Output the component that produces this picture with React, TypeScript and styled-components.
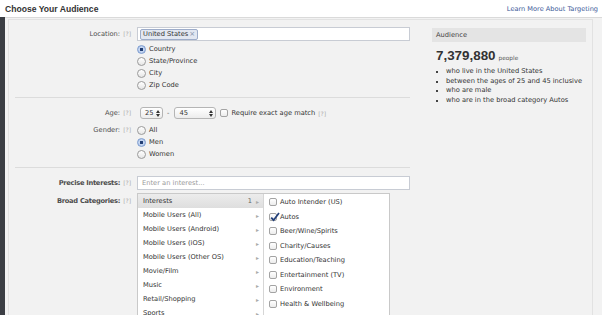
import React from 'react';
import styled, { createGlobalStyle } from 'styled-components';

const GlobalStyle = createGlobalStyle`
  html, body {
    margin: 0;
    padding: 0;
    background: #fff;
  }
  body {
    font-family: "DejaVu Sans", "Liberation Sans", sans-serif;
    font-size: 6.7px;
    color: #333;
  }
`;

const Page = styled.div`
  width: 602px;
  height: 315px;
  overflow: hidden;
  display: flex;
  flex-direction: column;
`;

const Header = styled.div`
  height: 17px;
  flex: none;
  box-sizing: border-box;
  padding: 0 4px 0 5px;
  display: flex;
  align-items: center;
  justify-content: space-between;
`;

const Title = styled.h1`
  margin: 0;
  font-family: "Liberation Sans", Arial, sans-serif;
  font-size: 8.6px;
  font-weight: bold;
  color: #333;
`;

const HeaderLink = styled.a`
  color: #3b5998;
  text-decoration: none;
  font-size: 6.6px;
`;

const Body = styled.div`
  flex: 1;
  display: flex;
  min-height: 0;
`;

const Strip = styled.div`
  width: 5px;
  flex: none;
  background: #3b3e44;
`;

const Main = styled.div`
  flex: 1;
  background: #f2f2f2;
  border-top: 1px solid #dadada;
  padding: 1px 9px 0 3px;
  display: flex;
`;

const Inner = styled.div`
  flex: 1;
  border: 1px solid #e2e2e2;
  border-bottom: none;
  padding-right: 5px;
  display: grid;
  grid-template-columns: 401px 154px;
  column-gap: 22px;
  align-items: start;
`;

const FormCol = styled.div`
  display: flex;
  flex-direction: column;
`;

const FieldRow = styled.div<{ $mt: number }>`
  display: grid;
  grid-template-columns: 122px 1fr;
  column-gap: 6px;
  margin-top: ${p => p.$mt}px;
  align-items: start;
`;

const Label = styled.div<{ $lh: number; $bold?: boolean }>`
  text-align: right;
  line-height: ${p => p.$lh}px;
  white-space: nowrap;
  color: #4e4e4e;
  font-weight: ${p => (p.$bold ? 'bold' : 'normal')};
  letter-spacing: ${p => (p.$bold ? '-0.28px' : 'normal')};
`;

const Help = styled.span`
  margin-left: 3px;
  color: #aaa;
  font-weight: normal;
  letter-spacing: 0;
  font-size: 6px;
`;

const Controls = styled.div`
  display: flex;
  flex-direction: column;
`;

const TextBox = styled.div`
  height: 14px;
  box-sizing: border-box;
  width: 273px;
  background: #fff;
  border: 1px solid #c8ccd4;
  display: flex;
  align-items: center;
  padding: 0 2px;
`;

const Placeholder = styled.span`
  color: #9a9a9a;
  padding-left: 2px;
`;

const Token = styled.span`
  height: 9px;
  line-height: 9px;
  padding: 0 2px;
  border: 1px solid #9dacc9;
  border-radius: 2px;
  background: #e2e7f1;
  color: #333;
  display: inline-flex;
  align-items: center;
  gap: 1px;
`;

const TokenX = styled.span`
  color: #8592aa;
  font-size: 7px;
`;

const Options = styled.div<{ $mt?: number }>`
  display: flex;
  flex-direction: column;
  margin-top: ${p => p.$mt ?? 0}px;
`;

const Option = styled.div`
  height: 12px;
  display: flex;
  align-items: center;
  gap: 3px;
  color: #333;
`;

const Radio = styled.span<{ $on?: boolean }>`
  width: 9px;
  height: 9px;
  box-sizing: border-box;
  border-radius: 50%;
  border: 1px solid ${p => (p.$on ? '#7d9ccf' : '#9a9a9a')};
  background: ${p =>
    p.$on
      ? 'radial-gradient(circle, #203d73 0 1.4px, #c7d7f1 1.9px, #a9c1e8 100%)'
      : 'linear-gradient(#ffffff, #e6e6e6)'};
  flex: none;
`;

const Box = styled.span<{ $ml?: number }>`
  width: 8px;
  height: 8px;
  box-sizing: border-box;
  margin-left: ${p => p.$ml ?? 0}px;
  border: 1px solid #a3a3a3;
  border-radius: 2px;
  background: linear-gradient(#ffffff, #ececec);
  flex: none;
  position: relative;
`;

const Tick = styled.svg`
  position: absolute;
  left: 0;
  top: -2px;
  overflow: visible;
`;

const Divider = styled.div<{ $mt: number }>`
  height: 1px;
  background: #dcdcdc;
  margin: ${p => p.$mt}px 0 0 6px;
`;

const AgeLine = styled.div`
  height: 12px;
  display: flex;
  align-items: center;
  padding-left: 3px;
`;

const Select = styled.div<{ $w: number }>`
  width: ${p => p.$w}px;
  height: 12px;
  box-sizing: border-box;
  border: 1px solid #b5b5b5;
  border-radius: 3px;
  background: linear-gradient(#ffffff, #ececec);
  display: flex;
  align-items: center;
  justify-content: space-between;
  padding: 0 2px 0 4px;
`;

const Dash = styled.span`
  margin: 0 5px 0 4px;
  color: #555;
`;

const CheckLabel = styled.span`
  margin-left: 3px;
  color: #333;
`;

const Picker = styled.div`
  width: 253px;
  height: 130px;
  box-sizing: border-box;
  border: 1px solid #c9c9c9;
  background: #fff;
  display: flex;
`;

const CatList = styled.div`
  width: 125px;
  flex: none;
  display: flex;
  flex-direction: column;
`;

const CatRow = styled.div<{ $active?: boolean }>`
  height: 14px;
  flex: none;
  display: flex;
  align-items: center;
  padding: 0 4px 0 5px;
  color: #333;
  background: ${p => (p.$active ? 'linear-gradient(#ececec, #dedede)' : 'transparent')};
`;

const CatName = styled.span`
  flex: 1;
`;

const CatCount = styled.span`
  color: #666;
  margin-right: 4px;
`;

const Caret = styled.span`
  color: #aaa;
  font-size: 6px;
`;

const SubList = styled.div`
  flex: 1;
  border-left: 1px solid #d6d6d6;
  padding: 1px 0 0 5px;
  display: flex;
  flex-direction: column;
`;

const SubRow = styled.div`
  height: 14.5px;
  flex: none;
  display: flex;
  align-items: center;
  gap: 3px;
  color: #333;
`;

const AudienceCol = styled.div`
  margin-top: 8px;
  display: flex;
  flex-direction: column;
`;

const AudienceHead = styled.div`
  height: 14px;
  background: #e4e4e4;
  display: flex;
  align-items: center;
  padding-left: 4px;
  color: #444;
`;

const Reach = styled.div`
  margin-top: 6px;
  padding-left: 4px;
  display: flex;
  align-items: baseline;
  gap: 3px;
`;

const ReachNum = styled.span`
  font-family: "Liberation Sans", Arial, sans-serif;
  font-size: 13.4px;
  font-weight: bold;
  color: #333;
`;

const ReachUnit = styled.span`
  font-size: 5.8px;
  color: #555;
`;

const Bullets = styled.ul`
  margin: 4px 0 0;
  padding: 0 0 0 14px;
  list-style: square;
  color: #333;

  li {
    line-height: 9.5px;
  }
  li::marker {
    font-size: 5px;
    color: #444;
  }
`;

function Arrows () {
  return (
    <svg width='4' height='7' viewBox='0 0 4 7'>
      <path d='M0 3 L2 0 L4 3 Z M0 4 L2 7 L4 4 Z' fill='#333' />
    </svg>
  );
}

function Check ({ on, ml }: { on?: boolean; ml?: number }) {
  return (
    <Box $ml={ml}>
      {on && (
        <Tick width='10' height='10' viewBox='0 0 10 10'>
          <path d='M1.2 5.6 L3.6 8.2 L9 1' fill='none' stroke='#23407a' strokeWidth='1.8' />
        </Tick>
      )}
    </Box>
  );
}

const locations = ['Country', 'State/Province', 'City', 'Zip Code'];
const genders = ['All', 'Men', 'Women'];
const categories = [
  'Interests',
  'Mobile Users (All)',
  'Mobile Users (Android)',
  'Mobile Users (iOS)',
  'Mobile Users (Other OS)',
  'Movie/Film',
  'Music',
  'Retail/Shopping',
  'Sports'
];
const interests = [
  'Auto Intender (US)',
  'Autos',
  'Beer/Wine/Spirits',
  'Charity/Causes',
  'Education/Teaching',
  'Entertainment (TV)',
  'Environment',
  'Health & Wellbeing'
];
const facts = [
  'who live in the United States',
  'between the ages of 25 and 45 inclusive',
  'who are male',
  'who are in the broad category Autos'
];

export default function App (): React.ReactElement {
  return (
    <Page>
      <GlobalStyle />
      <Header>
        <Title>Choose Your Audience</Title>
        <HeaderLink href='#'>Learn More About Targeting</HeaderLink>
      </Header>
      <Body>
        <Strip />
        <Main>
          <Inner>
            <FormCol>
              <FieldRow $mt={7}>
                <Label $lh={14}>Location:<Help>[?]</Help></Label>
                <Controls>
                  <TextBox>
                    <Token>United States<TokenX>×</TokenX></Token>
                  </TextBox>
                  <Options $mt={2}>
                    {locations.map((l, i) => (
                      <Option key={l}><Radio $on={i === 0} />{l}</Option>
                    ))}
                  </Options>
                </Controls>
              </FieldRow>

              <Divider $mt={6} />

              <FieldRow $mt={9}>
                <Label $lh={12}>Age:<Help>[?]</Help></Label>
                <AgeLine>
                  <Select $w={23}>25<Arrows /></Select>
                  <Dash>-</Dash>
                  <Select $w={42}>45<Arrows /></Select>
                  <Check ml={4} />
                  <CheckLabel>Require exact age match</CheckLabel>
                  <Help>[?]</Help>
                </AgeLine>
              </FieldRow>

              <FieldRow $mt={5}>
                <Label $lh={12}>Gender:<Help>[?]</Help></Label>
                <Options>
                  {genders.map((g, i) => (
                    <Option key={g}><Radio $on={i === 1} />{g}</Option>
                  ))}
                </Options>
              </FieldRow>

              <Divider $mt={7} />

              <FieldRow $mt={8}>
                <Label $lh={14} $bold>Precise Interests:<Help>[?]</Help></Label>
                <TextBox><Placeholder>Enter an interest...</Placeholder></TextBox>
              </FieldRow>

              <FieldRow $mt={3}>
                <Label $lh={16} $bold>Broad Categories:<Help>[?]</Help></Label>
                <Picker>
                  <CatList>
                    {categories.map((c, i) => (
                      <CatRow key={c} $active={i === 0}>
                        <CatName>{c}</CatName>
                        {i === 0 && <CatCount>1</CatCount>}
                        <Caret>▸</Caret>
                      </CatRow>
                    ))}
                  </CatList>
                  <SubList>
                    {interests.map((s, i) => (
                      <SubRow key={s}><Check on={i === 1} />{s}</SubRow>
                    ))}
                  </SubList>
                </Picker>
              </FieldRow>
            </FormCol>

            <AudienceCol>
              <AudienceHead>Audience</AudienceHead>
              <Reach>
                <ReachNum>7,379,880</ReachNum>
                <ReachUnit>people</ReachUnit>
              </Reach>
              <Bullets>
                {facts.map(f => <li key={f}>{f}</li>)}
              </Bullets>
            </AudienceCol>
          </Inner>
        </Main>
      </Body>
    </Page>
  );
}
